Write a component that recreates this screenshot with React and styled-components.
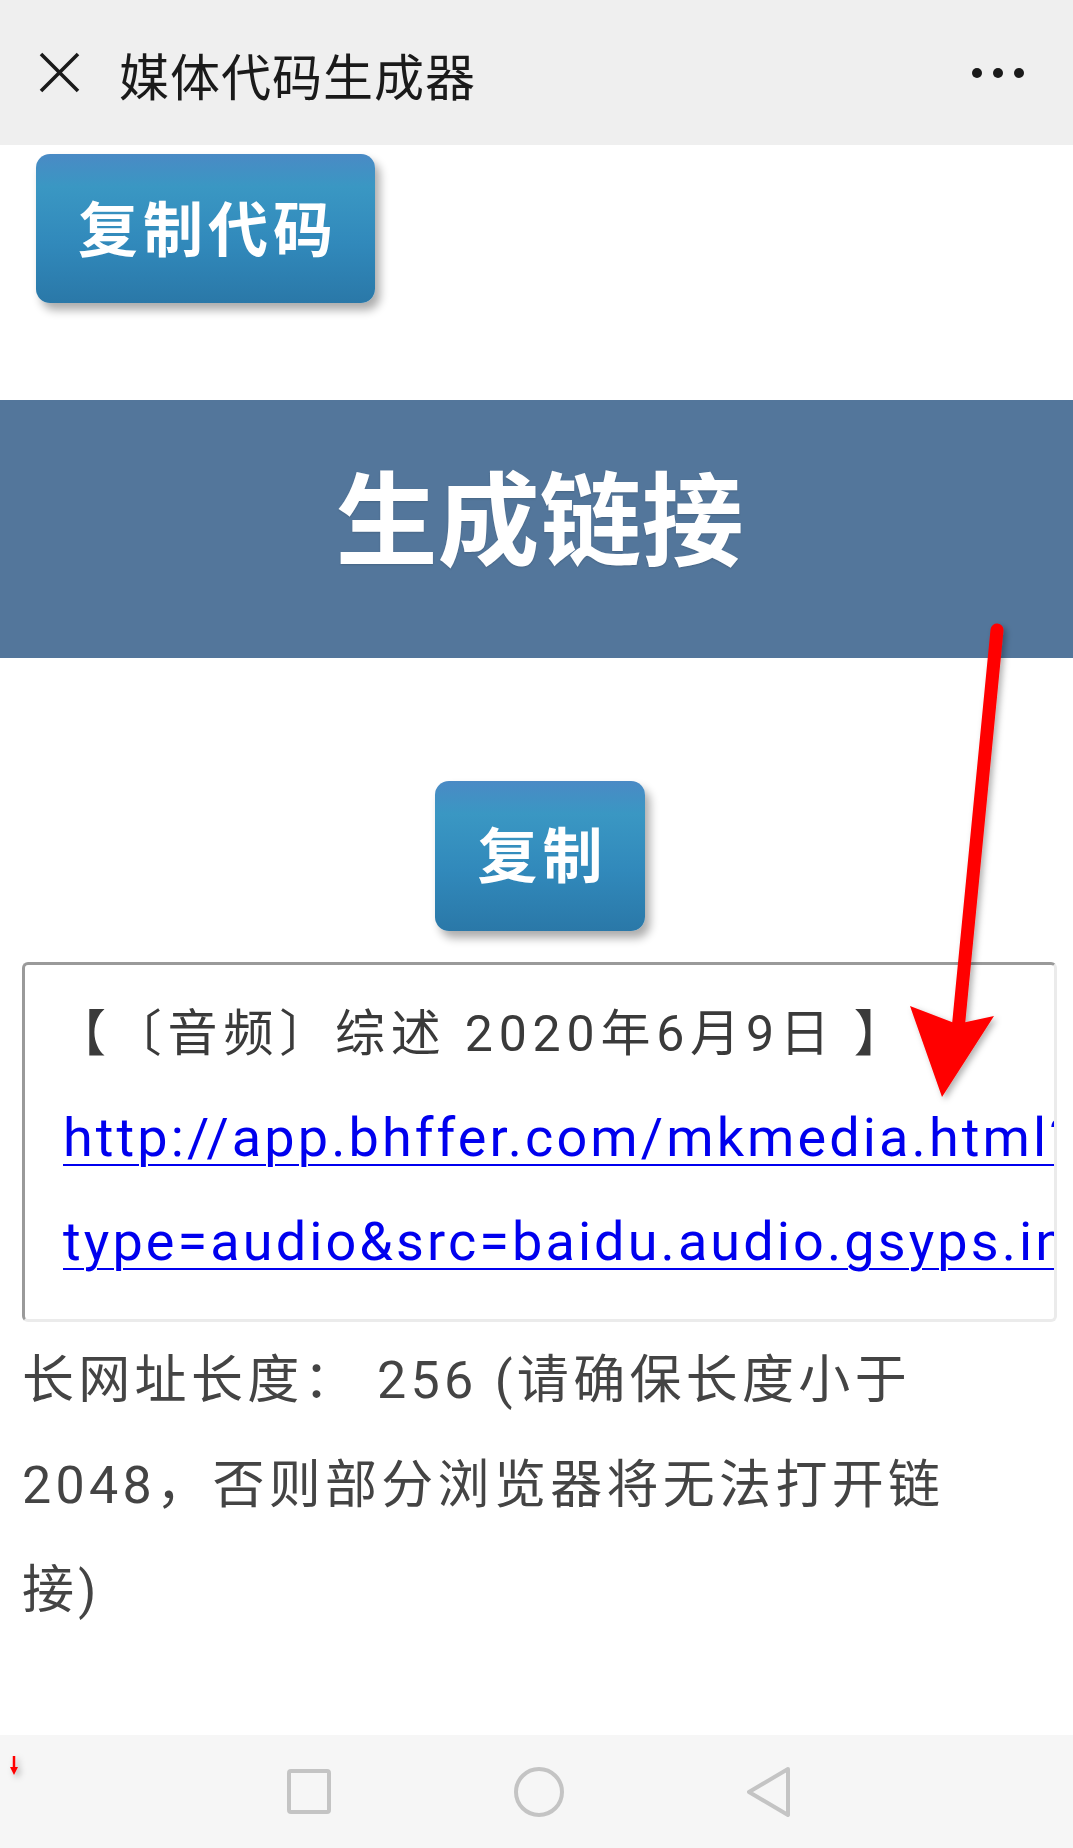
import styled, { createGlobalStyle } from "styled-components";

const GlobalStyle = createGlobalStyle`
  html, body {
    margin: 0;
    padding: 0;
    background: #ffffff;
  }
  body {
    font-family: Roboto, "Noto Sans CJK SC", sans-serif;
    text-spacing-trim: space-all;
  }
`;

const Page = styled.div`
  position: relative;
  width: 100%;
  min-height: 1848px;
  display: flex;
  flex-direction: column;
  background: #ffffff;
  overflow: hidden;
`;

const TopBar = styled.header`
  height: 145px;
  flex-shrink: 0;
  display: flex;
  align-items: center;
  padding: 0 49px 0 39px;
  background: #efefef;
  box-sizing: border-box;
`;

const CloseIcon = styled.svg`
  width: 41px;
  height: 41px;
  flex-shrink: 0;
  margin-top: -1px;
`;

const TopTitle = styled.h1`
  margin: 3px 0 0 39px;
  flex: 1;
  font-family: "Noto Sans CJK SC", sans-serif;
  font-size: 50px;
  font-weight: 400;
  letter-spacing: 1px;
  color: #1a1a1a;
  line-height: 1;
`;

const MoreDots = styled.div`
  display: flex;
  gap: 11px;
`;

const Dot = styled.span`
  width: 10px;
  height: 10px;
  border-radius: 50%;
  background: #1a1a1a;
`;

const Main = styled.main`
  display: flex;
  flex-direction: column;
  align-items: flex-start;
`;

const GradientButton = styled.div`
  width: ${(p) => p.$w}px;
  height: ${(p) => p.$h}px;
  margin: ${(p) => p.$m};
  align-self: ${(p) => (p.$center ? "center" : "flex-start")};
  display: flex;
  align-items: center;
  justify-content: center;
  border-radius: 14px;
  background: linear-gradient(
    to bottom,
    #4a8ac5 0%,
    #3a97c3 22%,
    #3189bb 60%,
    #2a78a8 100%
  );
  box-shadow: 5px 7px 10px rgba(0, 0, 0, 0.33);
  color: #ffffff;
  font-family: "Noto Sans CJK SC", sans-serif;
  font-size: 60px;
  font-weight: 700;
  letter-spacing: 5px;
  padding: 0 0 ${(p) => p.$lift}px 5px;
  box-sizing: border-box;
  cursor: pointer;
`;

const Banner = styled.div`
  align-self: stretch;
  height: 258px;
  margin-top: 97px;
  display: flex;
  align-items: center;
  justify-content: center;
  background: #53769b;
  color: #ffffff;
  font-family: "Noto Sans CJK SC", sans-serif;
  font-size: 102px;
  font-weight: 700;
  padding: 0 0 32px 6px;
  box-sizing: border-box;
  text-shadow: 0 1px 2px rgba(0, 0, 0, 0.15);
`;

const LinkBox = styled.div`
  width: 1035px;
  height: 360px;
  margin: 31px 0 0 22px;
  box-sizing: border-box;
  padding: 18px 0 0 38px;
  border-style: solid;
  border-width: 3px;
  border-color: #9a9a9a #ebebeb #ebebeb #9a9a9a;
  border-radius: 6px;
  overflow: hidden;
  white-space: nowrap;
`;

const BoxTitle = styled.div`
  font-size: 50px;
  line-height: 103px;
  letter-spacing: 5.8px;
  color: #3a3a3a;
  margin-left: -7px;
`;

const LinkLine = styled.a`
  display: block;
  font-size: 54px;
  line-height: 104px;
  letter-spacing: 3.1px;
  color: #0000ee;
  text-decoration: underline;
  text-decoration-thickness: 2px;
  text-underline-offset: 8px;
`;

const Note = styled.p`
  width: 960px;
  margin: 6px 0 0 0;
  padding-left: 22px;
  font-size: 52px;
  line-height: 105px;
  letter-spacing: 4.3px;
  color: #444444;
`;

const NavBar = styled.nav`
  margin-top: auto;
  height: 113px;
  flex-shrink: 0;
  display: flex;
  align-items: center;
  justify-content: center;
  gap: 183px;
  padding-left: 5px;
  background: #f6f6f6;
`;

const NavIcon = styled.svg`
  width: ${(p) => p.$w}px;
  height: ${(p) => p.$h}px;
  display: block;
`;

const ArrowLayer = styled.svg`
  position: absolute;
  left: 0;
  top: 0;
  width: 1073px;
  height: 1848px;
  pointer-events: none;
`;

export default function App() {
  return (
    <Page>
      <GlobalStyle />
      <TopBar>
        <CloseIcon viewBox="0 0 41 41">
          <path
            d="M2 2 L39 39 M39 2 L2 39"
            stroke="#1a1a1a"
            strokeWidth="3.6"
            fill="none"
          />
        </CloseIcon>
        <TopTitle>媒体代码生成器</TopTitle>
        <MoreDots>
          <Dot />
          <Dot />
          <Dot />
        </MoreDots>
      </TopBar>

      <Main>
        <GradientButton $w={339} $h={149} $m="9px 0 0 36px" $lift={6}>
          复制代码
        </GradientButton>
        <Banner>生成链接</Banner>
        <GradientButton
          $w={210}
          $h={150}
          $m="123px 0 0 7px"
          $lift={10}
          $center
        >
          复制
        </GradientButton>

        <LinkBox>
          <BoxTitle>【〔音频〕综述 2020年6月9日 】</BoxTitle>
          <LinkLine href="#">http://app.bhffer.com/mkmedia.html?</LinkLine>
          <LinkLine href="#">
            type=audio&amp;src=baidu.audio.gsyps.in/audio/20200609.mp3
          </LinkLine>
        </LinkBox>

        <Note>
          长网址长度： 256 (请确保长度小于2048，否则部分浏览器将无法打开链接)
        </Note>
      </Main>

      <NavBar>
        <NavIcon $w={44} $h={45} viewBox="0 0 44 45">
          <rect
            x="2"
            y="2"
            width="40"
            height="41"
            rx="2"
            fill="none"
            stroke="#c4c4c4"
            strokeWidth="4"
          />
        </NavIcon>
        <NavIcon $w={50} $h={50} viewBox="0 0 50 50">
          <circle
            cx="25"
            cy="25"
            r="23"
            fill="none"
            stroke="#c4c4c4"
            strokeWidth="4"
          />
        </NavIcon>
        <NavIcon $w={44} $h={50} viewBox="0 0 44 50">
          <path
            d="M41 2 L2 25 L41 48 Z"
            fill="none"
            stroke="#c4c4c4"
            strokeWidth="4"
            strokeLinejoin="round"
          />
        </NavIcon>
      </NavBar>

      <ArrowLayer viewBox="0 0 1073 1848">
        <defs>
          <filter id="shade" x="-20%" y="-20%" width="140%" height="140%">
            <feDropShadow dx="3" dy="3" stdDeviation="3" floodOpacity="0.3" />
          </filter>
        </defs>
        <g filter="url(#shade)" fill="#ff0000">
          <line
            x1="997"
            y1="630"
            x2="958"
            y2="1030"
            stroke="#ff0000"
            strokeWidth="13"
            strokeLinecap="round"
          />
          <path d="M942 1097 L910 1006 L957 1024 L994 1016 Z" />
          <line
            x1="14"
            y1="1756"
            x2="14"
            y2="1768"
            stroke="#ff0000"
            strokeWidth="2.5"
          />
          <path d="M10 1767 L18 1767 L14 1775 Z" />
        </g>
      </ArrowLayer>
    </Page>
  );
}
